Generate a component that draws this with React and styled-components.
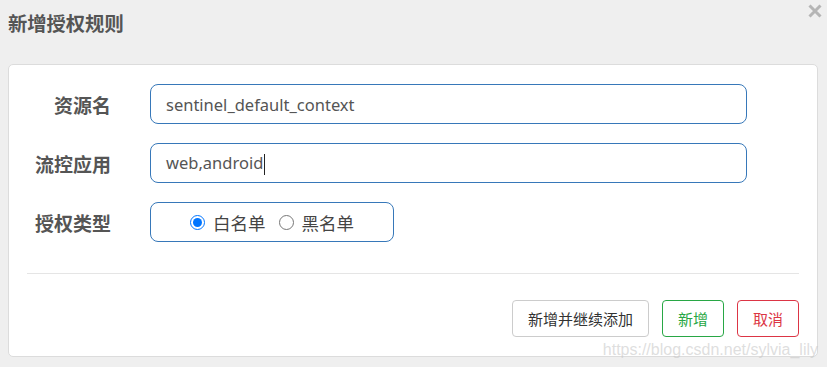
import React from 'react';
import styled, { createGlobalStyle } from 'styled-components';

const GlobalStyle = createGlobalStyle`
  html, body {
    margin: 0;
    padding: 0;
    background: #efefef;
  }
  body {
    font-family: "Noto Sans CJK SC", "Noto Sans", sans-serif;
  }
`;

const Dialog = styled.div`
  position: relative;
  width: 827px;
  height: 367px;
  box-sizing: border-box;
  padding: 0 9px 0 8px;
  background: #efefef;
  overflow: hidden;
`;

const Header = styled.div`
  height: 64px;
  display: flex;
  align-items: center;
  justify-content: space-between;
`;

const Title = styled.h4`
  margin: 0 0 16px;
  font-size: 19.3px;
  font-weight: 700;
  color: #555;
  line-height: 1;
`;

const Close = styled.button`
  position: absolute;
  top: 3px;
  right: 4px;
  width: 16px;
  height: 16px;
  padding: 0;
  border: none;
  background: transparent;
  cursor: pointer;
`;

const Card = styled.div`
  background: #fff;
  border: 1px solid #dcdcdc;
  border-radius: 5px;
  padding: 19px 18px 19px 18px;
`;

const Form = styled.div`
  display: flex;
  flex-direction: column;
  gap: 19px;
  padding-bottom: 31px;
  border-bottom: 1px solid #e5e5e5;
`;

const Row = styled.div`
  display: grid;
  grid-template-columns: 84px auto;
  column-gap: 39px;
  align-items: center;
`;

const Label = styled.label`
  text-align: right;
  font-size: 19px;
  font-weight: 700;
  color: #555;
  white-space: nowrap;
`;

const Field = styled.div`
  box-sizing: border-box;
  width: ${p => p.$width}px;
  height: 40px;
  border: 1px solid #3778b9;
  border-radius: 8px;
  padding: 0 15px;
  display: flex;
  align-items: center;
  justify-content: ${p => (p.$center ? 'center' : 'flex-start')};
  gap: 13px;
  font-family: "Noto Sans", "Noto Sans CJK SC", sans-serif;
  font-size: 16.5px;
  color: #555;
`;

const Caret = styled.span`
  display: inline-block;
  width: 1px;
  height: 21px;
  margin-left: 1px;
  vertical-align: middle;
  background: #222;
`;

const RadioLabel = styled.label`
  display: flex;
  align-items: center;
  gap: 8px;
  font-family: "Noto Sans CJK SC", sans-serif;
  font-size: 17.5px;
  color: #444;

  input {
    margin: 0;
    width: 15px;
    height: 15px;
  }
`;

const Footer = styled.div`
  display: flex;
  justify-content: flex-end;
  gap: 13px;
  padding-top: 26px;
`;

const tones = {
  default: { border: '#cccccc', color: '#333' },
  success: { border: '#28a745', color: '#28a745' },
  danger: { border: '#dc3545', color: '#dc3545' },
};

const Button = styled.button`
  height: 37px;
  padding: 0 15px;
  background: #fff;
  border: 1px solid ${p => tones[p.$tone].border};
  color: ${p => tones[p.$tone].color};
  border-radius: 4px;
  font-family: "Noto Sans CJK SC", sans-serif;
  font-size: 15px;
  cursor: pointer;
`;

const Watermark = styled.span`
  position: absolute;
  right: 9px;
  bottom: 8px;
  font-family: "Liberation Sans", Arial, sans-serif;
  font-size: 16px;
  color: rgba(200, 200, 200, 0.6);
  pointer-events: none;
  white-space: nowrap;
`;

export default function App() {
  return (
    <>
      <GlobalStyle />
      <Dialog>
        <Header>
          <Title>新增授权规则</Title>
          <Close aria-label="close">
            <svg width="16" height="16" viewBox="0 0 16 16">
              <path d="M2.5 2.5 L13.5 13.5 M13.5 2.5 L2.5 13.5" stroke="#b5b5b5" strokeWidth="3" />
            </svg>
          </Close>
        </Header>
        <Card>
          <Form>
            <Row>
              <Label>资源名</Label>
              <Field $width={597}>sentinel_default_context</Field>
            </Row>
            <Row>
              <Label>流控应用</Label>
              <Field $width={597}>
                <span>
                  web,android
                  <Caret />
                </span>
              </Field>
            </Row>
            <Row>
              <Label>授权类型</Label>
              <Field $width={244} $center>
                <RadioLabel>
                  <input type="radio" name="strategy" defaultChecked />
                  白名单
                </RadioLabel>
                <RadioLabel>
                  <input type="radio" name="strategy" />
                  黑名单
                </RadioLabel>
              </Field>
            </Row>
          </Form>
          <Footer>
            <Button $tone="default">新增并继续添加</Button>
            <Button $tone="success">新增</Button>
            <Button $tone="danger">取消</Button>
          </Footer>
        </Card>
        <Watermark>https://blog.csdn.net/sylvia_lily</Watermark>
      </Dialog>
    </>
  );
}
